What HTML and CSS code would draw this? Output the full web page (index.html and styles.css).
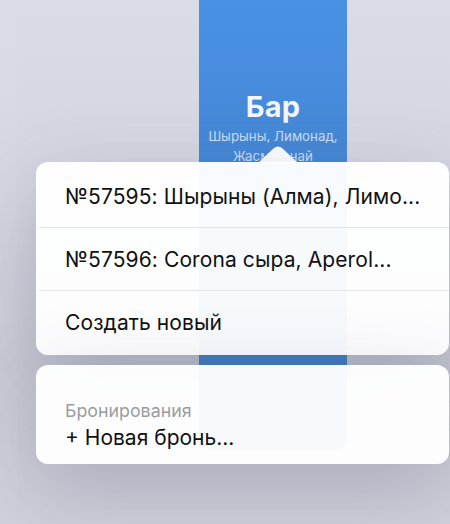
FILE: index.html
```html
<!DOCTYPE html>
<html lang="ru">
<head>
<meta charset="utf-8">
<link rel="stylesheet" href="styles.css">
</head>
<body>
<div class="backdrop">
  <div class="edge"></div>
  <div class="column">
    <div class="col-title">Бар</div>
    <div class="col-sub">Шырыны, Лимонад,<br>Жасмин чай</div>
  </div>
</div>
<div class="popover">
  <svg class="arrow" width="40" height="18" viewBox="0 0 40 18"><path d="M0 18 L15.5 3.5 Q20 -0.5 24.5 3.5 L40 18 Z" fill="#fdfeff"/></svg>
  <div class="card card-menu">
    <div class="row">№57595: Шырыны (Алма), Лимо...</div>
    <div class="row">№57596: Corona сыра, Aperol...</div>
    <div class="row">Создать новый</div>
  </div>
  <div class="card card-booking">
    <div class="label">Бронирования</div>
    <div class="row-main">+ Новая бронь...</div>
  </div>
</div>
</body>
</html>
```
FILE: styles.css
```css
html, body {
  margin: 0;
  padding: 0;
}
body {
  width: 450px;
  height: 524px;
  overflow: hidden;
  position: relative;
  background: linear-gradient(180deg, #d9dce6 0%, #d3d6e0 40%, #c8cbd5 70%, #ced1db 100%);
  font-family: Inter, "Noto Sans", "Liberation Sans", sans-serif;
}
.backdrop {
  display: flex;
  height: 524px;
}
.edge {
  width: 17px;
  height: 524px;
  background: rgba(255,255,255,0.04);
}
.column {
  margin-left: 182px;
  width: 148px;
  height: 450px;
  border-radius: 0 0 10px 10px;
  background: linear-gradient(180deg, #4a91e4 0%, #4486d4 40%, #3e7dc4 100%);
  display: flex;
  flex-direction: column;
  align-items: center;
  padding-top: 89px;
  box-sizing: border-box;
}
.col-title {
  font-size: 29px;
  font-weight: 700;
  color: #f3f6fb;
  line-height: 36px;
  letter-spacing: 0.2px;
}
.col-sub {
  margin-top: 1px;
  font-size: 13.3px;
  line-height: 20px;
  color: rgba(255,255,255,0.72);
  text-align: center;
}
.popover {
  position: absolute;
  left: 36px;
  top: 145px;
  width: 413px;
  display: flex;
  flex-direction: column;
}
.arrow {
  display: block;
  margin-left: 222px;
  margin-bottom: -1px;
}
.card {
  background: rgba(255,255,255,0.96);
  border-radius: 12px;
  box-shadow: 0 24px 80px rgba(70,75,100,0.26);
}
.card-menu {
  padding-top: 3px;
  padding-bottom: 2px;
}
.row {
  height: 62px;
  display: flex;
  align-items: center;
  padding-left: 29px;
  font-size: 21px;
  color: #111;
  letter-spacing: 0.1px;
}
.row + .row {
  border-top: 1.5px solid #e4e5e8;
  margin-left: 3px;
  padding-left: 26px;
}
.card-booking {
  margin-top: 10px;
  height: 99px;
  box-sizing: border-box;
  padding: 35px 0 0 29px;
}
.label {
  font-size: 17.8px;
  color: #9b9ca0;
  line-height: 22px;
}
.row-main {
  margin-top: 3px;
  font-size: 21px;
  color: #111;
  line-height: 26px;
}
```
